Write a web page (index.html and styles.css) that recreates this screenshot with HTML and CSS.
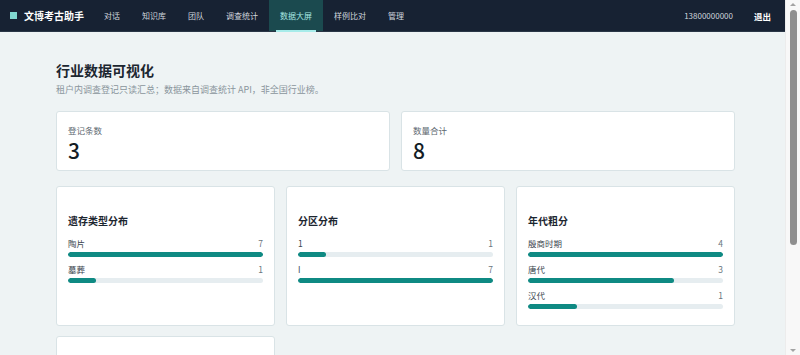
FILE: index.html
```html
<!DOCTYPE html>
<html lang="zh-CN">
<head>
    <meta charset="UTF-8">
    <meta name="viewport" content="width=device-width, initial-scale=1.0">
    <title>数据大屏 - 文博考古助手</title>
    <link rel="stylesheet" href="styles.css">
</head>
<body>
    <header class="topbar">
        <div class="brand"><span class="brand-mark"></span>文博考古助手</div>
        <nav class="nav">
            <a class="nav-link">对话</a>
            <a class="nav-link">知识库</a>
            <a class="nav-link">团队</a>
            <a class="nav-link">调查统计</a>
            <a class="nav-link active">数据大屏</a>
            <a class="nav-link">样例比对</a>
            <a class="nav-link">管理</a>
        </nav>
        <div class="user">
            <span class="phone">13800000000</span>
            <a class="logout">退出</a>
        </div>
    </header>

    <main class="page">
        <h1>行业数据可视化</h1>
        <p class="subtitle">租户内调查登记只读汇总；数据来自调查统计 API，非全国行业榜。</p>

        <section class="stats">
            <div class="card stat">
                <div class="stat-label">登记条数</div>
                <div class="stat-value">3</div>
            </div>
            <div class="card stat">
                <div class="stat-label">数量合计</div>
                <div class="stat-value">8</div>
            </div>
        </section>

        <section class="charts">
            <div class="card chart">
                <h2>遗存类型分布</h2>
                <div class="row">
                    <div class="row-head"><span>陶片</span><span>7</span></div>
                    <div class="track"><div class="fill" style="width: 100%"></div></div>
                </div>
                <div class="row">
                    <div class="row-head"><span>墓葬</span><span>1</span></div>
                    <div class="track"><div class="fill" style="width: 14.3%"></div></div>
                </div>
            </div>
            <div class="card chart">
                <h2>分区分布</h2>
                <div class="row">
                    <div class="row-head"><span>1</span><span>1</span></div>
                    <div class="track"><div class="fill" style="width: 14.3%"></div></div>
                </div>
                <div class="row">
                    <div class="row-head"><span>I</span><span>7</span></div>
                    <div class="track"><div class="fill" style="width: 100%"></div></div>
                </div>
            </div>
            <div class="card chart">
                <h2>年代粗分</h2>
                <div class="row">
                    <div class="row-head"><span>殷商时期</span><span>4</span></div>
                    <div class="track"><div class="fill" style="width: 100%"></div></div>
                </div>
                <div class="row">
                    <div class="row-head"><span>唐代</span><span>3</span></div>
                    <div class="track"><div class="fill" style="width: 75%"></div></div>
                </div>
                <div class="row">
                    <div class="row-head"><span>汉代</span><span>1</span></div>
                    <div class="track"><div class="fill" style="width: 25%"></div></div>
                </div>
            </div>
            <div class="card chart"></div>
        </section>
    </main>

    <!-- 模拟窗口滚动条 -->
    <div class="scrollbar" aria-hidden="true">
        <span class="arrow up"></span>
        <span class="thumb"></span>
        <span class="arrow down"></span>
    </div>
</body>
</html>
```

FILE: styles.css
```css
/* 基础 */
* {
    box-sizing: border-box;
}

body {
    margin: 0 15px 0 0;
    background: #eef3f4;
    color: #1f2a33;
    font-family: "Noto Sans CJK SC", "Noto Sans", sans-serif;
}

a {
    text-decoration: none;
    color: inherit;
    cursor: pointer;
}

/* 顶部导航 */
.topbar {
    display: flex;
    align-items: stretch;
    height: 32px;
    background: #172233;
    border-bottom: 1px solid #2a3646;
    padding: 0 14px 0 10px;
    color: #cfd6dd;
    font-size: 8px;
}

.brand {
    display: flex;
    align-items: center;
    gap: 7px;
    font-size: 10px;
    font-weight: bold;
    color: #ffffff;
    margin-right: 9px;
}

.brand-mark {
    width: 7px;
    height: 7px;
    background: #7fd6cf;
}

.nav {
    display: flex;
    align-items: stretch;
}

.nav-link {
    display: flex;
    align-items: center;
    padding: 0 11px;
    position: relative;
}

.nav-link.active {
    background: #1b4a4f;
    color: #a6e6e2;
}

.nav-link.active::after {
    content: "";
    position: absolute;
    left: 7px;
    right: 7px;
    bottom: -1px;
    height: 2px;
    background: #a7ecea;
}

.user {
    margin-left: auto;
    display: flex;
    align-items: center;
    gap: 21px;
}

.logout {
    color: #ffffff;
    font-size: 8.5px;
    font-weight: bold;
}

/* 主体 */
.page {
    padding: 28px 50px 28px 56px;
}

h1 {
    margin: 0;
    font-size: 14px;
    line-height: 20px;
    font-weight: bold;
    color: #1c2630;
}

.subtitle {
    margin: 4px 0 0;
    font-size: 9px;
    line-height: 12px;
    color: #8a959c;
}

.card {
    background: #ffffff;
    border: 1px solid #d9e3e6;
    border-radius: 3px;
}

/* 指标卡 */
.stats {
    display: grid;
    grid-template-columns: 1fr 1fr;
    gap: 11px;
    margin-top: 15px;
}

.stat {
    height: 60px;
    padding: 12px 11px 8px;
}

.stat-label {
    font-size: 8.5px;
    line-height: 12px;
    color: #5d6870;
}

.stat-value {
    margin-top: 1px;
    font-size: 21px;
    line-height: 26px;
    font-weight: 500;
    color: #141d26;
}

/* 图表卡 */
.charts {
    display: grid;
    grid-template-columns: repeat(3, 1fr);
    gap: 10px 11px;
    margin-top: 15px;
}

.chart {
    height: 140px;
    padding: 27px 11px 12px;
}

.chart h2 {
    margin: 0 0 9px;
    font-size: 10px;
    line-height: 14px;
    font-weight: bold;
    color: #1c2630;
}

.row + .row {
    margin-top: 6px;
}

.row-head {
    display: flex;
    justify-content: space-between;
    font-size: 8.5px;
    line-height: 12px;
    color: #3c4750;
}

.row-head span:last-child {
    color: #6b767e;
}

.track {
    margin-top: 3px;
    height: 5px;
    background: #e6edf0;
    border-radius: 3px;
    overflow: hidden;
}

.fill {
    height: 100%;
    background: #0f8a83;
    border-radius: 3px;
}

/* 滚动条 */
.scrollbar {
    position: fixed;
    top: 0;
    right: 0;
    bottom: 0;
    width: 15px;
    background: #f8f8f8;
    border-left: 1px solid #ececec;
    display: flex;
    flex-direction: column;
    align-items: center;
    padding: 3px 0;
}

.thumb {
    width: 7px;
    height: 235px;
    margin-top: 4px;
    background: #8f8f8f;
    border-radius: 4px;
}

.arrow {
    width: 0;
    height: 0;
    border-left: 3px solid transparent;
    border-right: 3px solid transparent;
}

.arrow.up {
    border-bottom: 3px solid #a3a3a3;
}

.arrow.down {
    margin-top: auto;
    border-top: 3px solid #a3a3a3;
}
```
